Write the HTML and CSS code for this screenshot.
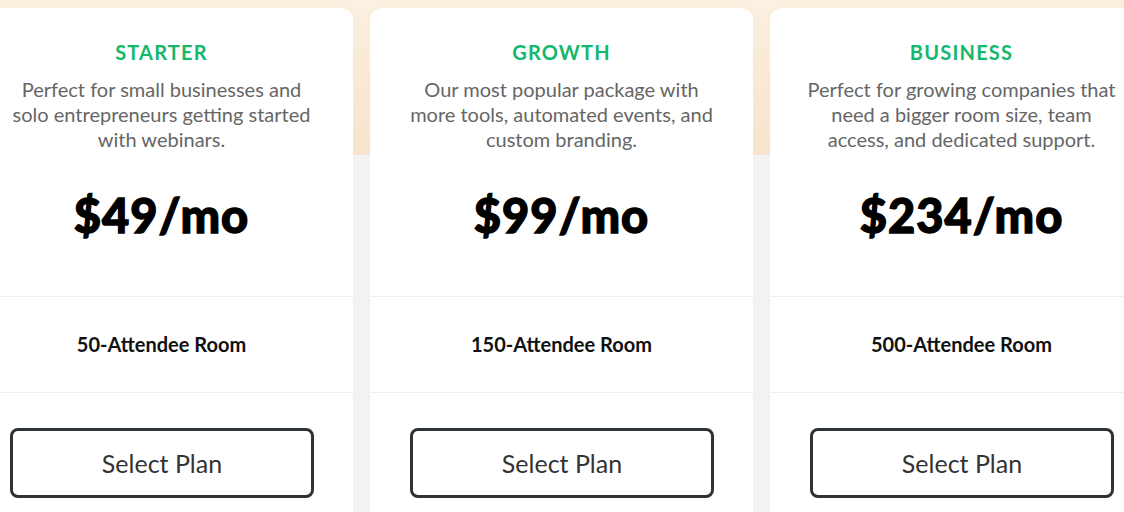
FILE: index.html
```
<!DOCTYPE html>
<html>
<head>
<meta charset="utf-8">
<link rel="stylesheet" href="styles.css">
</head>
<body>
<div class="page">
  <div class="plans">
    <div class="card">
      <div class="top">
        <h2 class="name">STARTER</h2>
        <p class="desc">Perfect for small businesses and solo entrepreneurs getting started with webinars.</p>
        <div class="price">$49/mo</div>
      </div>
      <div class="feature">50-Attendee Room</div>
      <div class="action"><button class="btn">Select Plan</button></div>
    </div>
    <div class="card">
      <div class="top">
        <h2 class="name">GROWTH</h2>
        <p class="desc">Our most popular package with more tools, automated events, and custom branding.</p>
        <div class="price">$99/mo</div>
      </div>
      <div class="feature">150-Attendee Room</div>
      <div class="action"><button class="btn">Select Plan</button></div>
    </div>
    <div class="card">
      <div class="top">
        <h2 class="name">BUSINESS</h2>
        <p class="desc">Perfect for growing companies that need a bigger room size, team access, and dedicated support.</p>
        <div class="price">$234/mo</div>
      </div>
      <div class="feature">500-Attendee Room</div>
      <div class="action"><button class="btn">Select Plan</button></div>
    </div>
  </div>
</div>
</body>
</html>
```

FILE: styles.css
```
html, body {
  margin: 0;
  padding: 0;
}
body {
  font-family: Lato, "Open Sans", sans-serif;
  background: #f5f5f5;
  overflow: hidden;
}
.page {
  width: 1124px;
  height: 512px;
  overflow: hidden;
  background: linear-gradient(to bottom, #fdf1e2 0px, #f9e6cf 155px, #f5f5f5 155px, #f5f5f5 100%);
}
.plans {
  display: flex;
  justify-content: center;
  gap: 17px;
  padding-top: 8px;
  margin-left: -1px;
}
.card {
  flex: 0 0 383px;
  width: 383px;
  background: #fff;
  border-radius: 12px 12px 0 0;
  box-shadow: 0 0 18px rgba(120, 80, 30, 0.04);
  text-align: center;
  height: 520px;
}
.top {
  padding: 32px 36px 50px;
  border-bottom: 1px solid #eeeeee;
}
.name {
  margin: 0;
  font-size: 20px;
  line-height: 24px;
  font-weight: 700;
  letter-spacing: 1.2px;
  color: #14b86c;
}
.desc {
  margin: 13px 0 0;
  font-size: 20px;
  line-height: 25px;
  color: #666666;
}
.price {
  margin-top: 32px;
  font-size: 47px;
  line-height: 62px;
  font-weight: 900;
  letter-spacing: 1px;
  -webkit-text-stroke: 1.3px #000;
  color: #000;
}
.feature {
  padding: 35px 0 36px;
  font-size: 20px;
  line-height: 24px;
  font-weight: 700;
  color: #111;
  border-bottom: 1px solid #eeeeee;
}
.action {
  padding: 35px 40px 0;
}
.btn {
  display: block;
  width: 304px;
  height: 70px;
  margin: 0 auto;
  border: 3px solid #2e3337;
  border-radius: 8px;
  background: #fff;
  font-family: Lato, sans-serif;
  font-size: 25px;
  color: #333;
  padding: 0;
}
```
